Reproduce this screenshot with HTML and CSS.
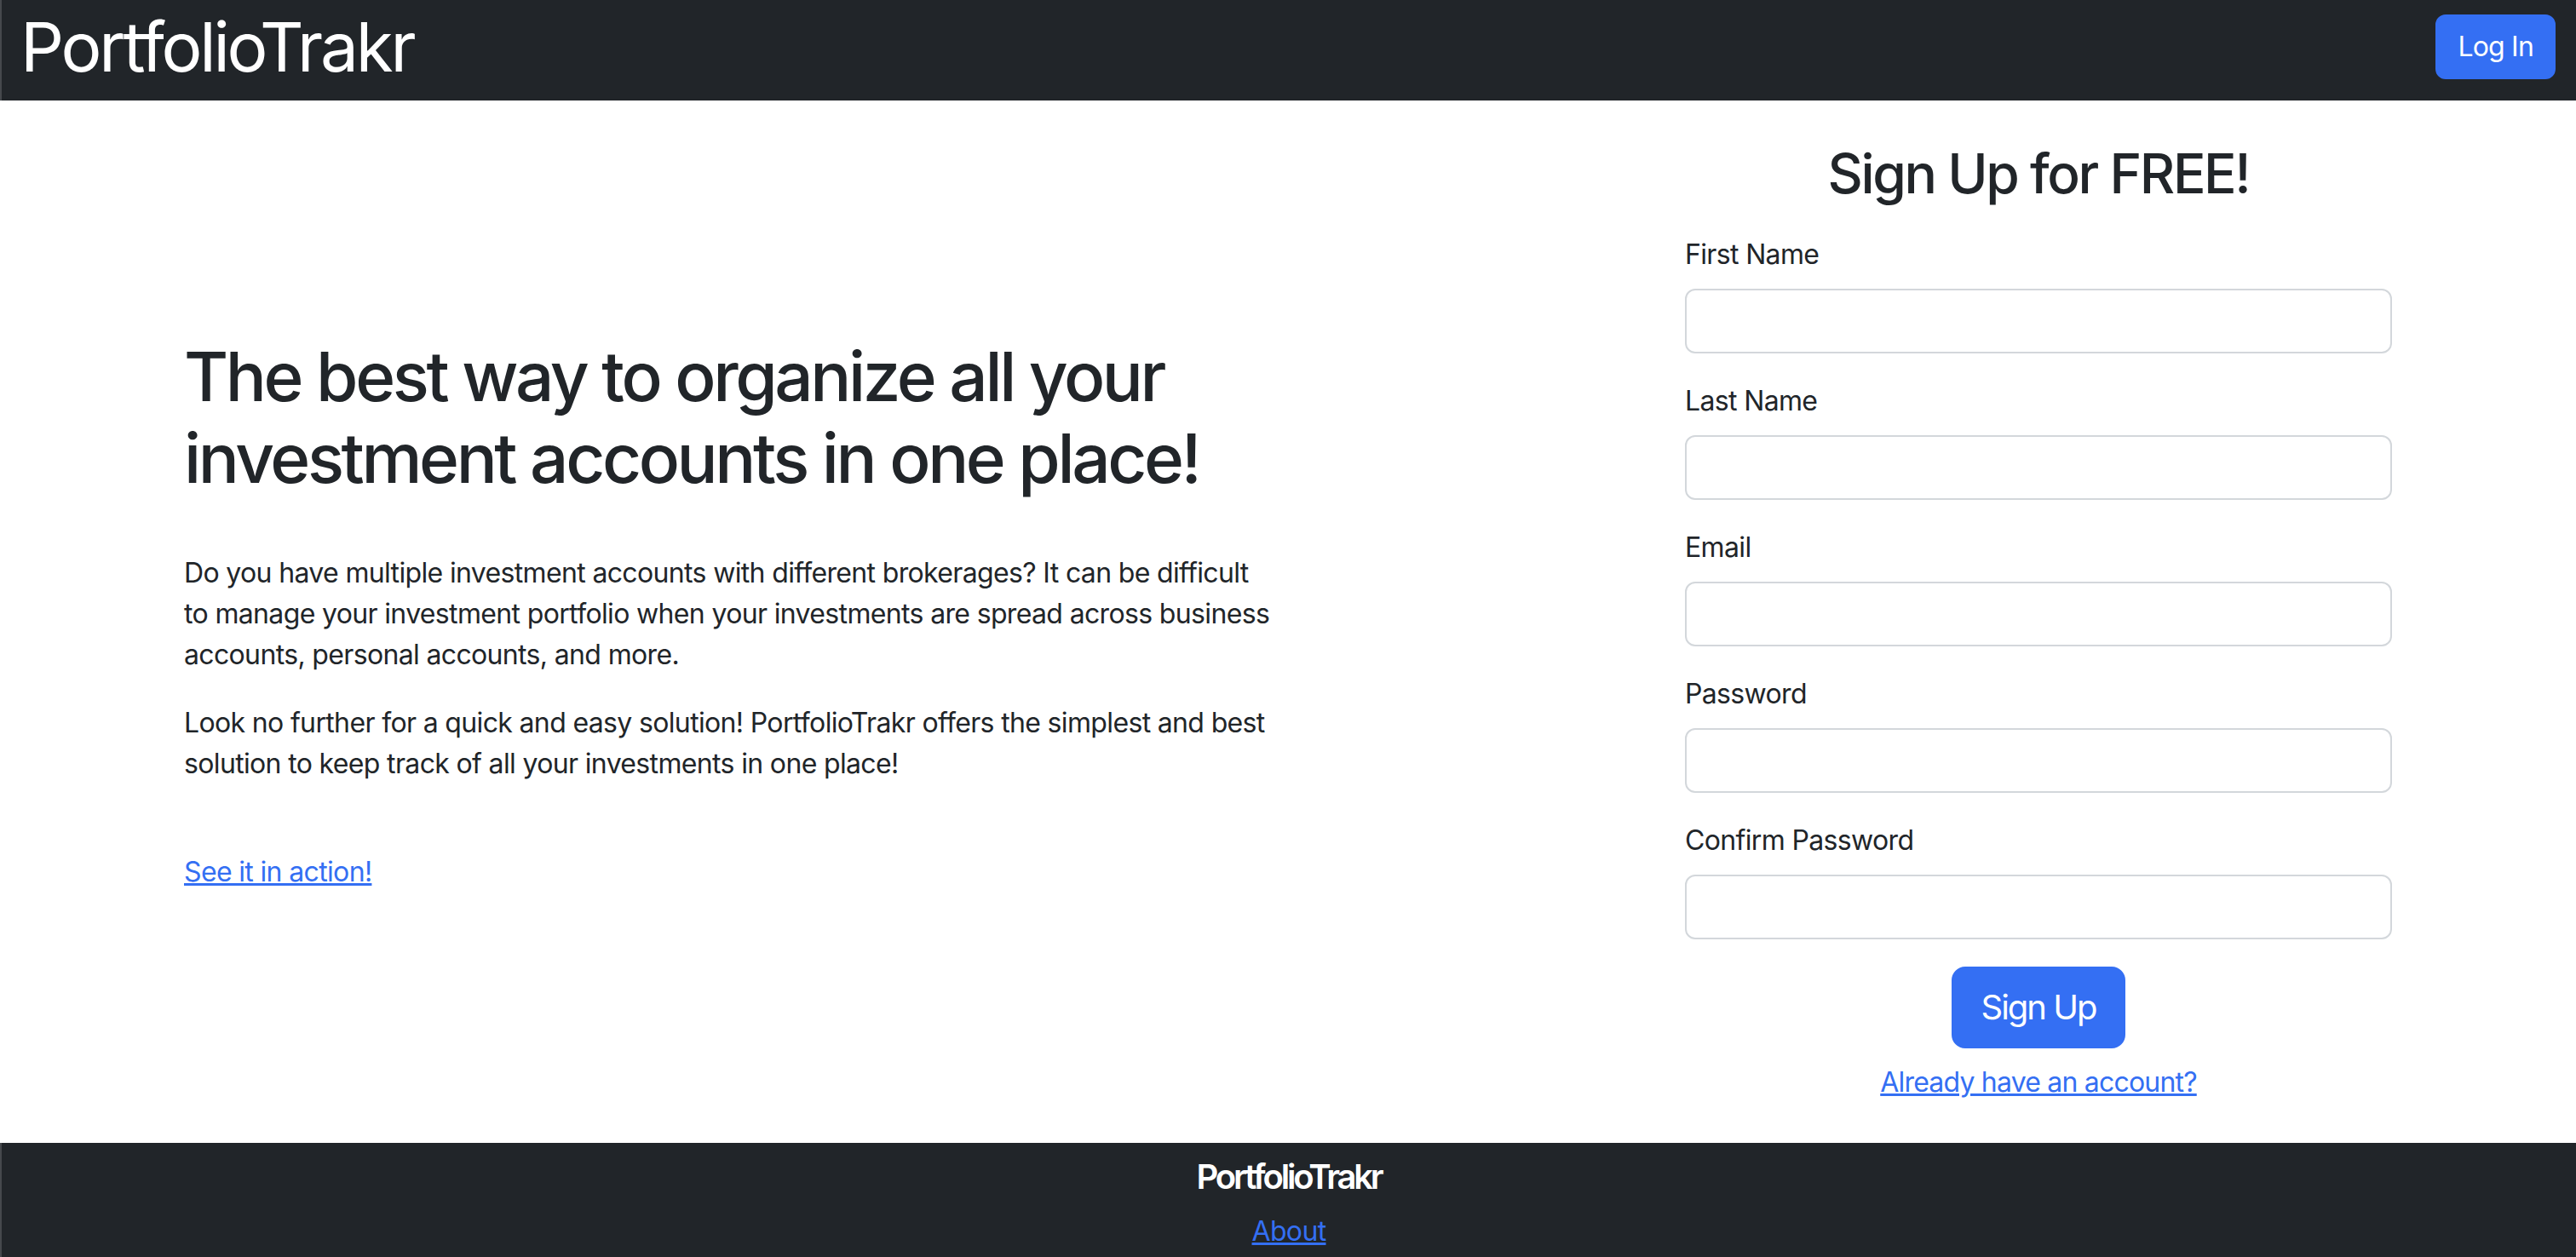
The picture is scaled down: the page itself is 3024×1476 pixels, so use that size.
FILE: index.html
```html
<!DOCTYPE html>
<html lang="en">
<head>
<meta charset="utf-8">
<title>PortfolioTrakr</title>
<link rel="stylesheet" href="styles.css">
</head>
<body>
<nav class="navbar">
  <a class="brand" href="#">PortfolioTrakr</a>
  <button class="btn btn-login" type="button">Log In</button>
</nav>
<main class="hero">
  <section class="intro">
    <h1 class="intro-title">The best way to organize all your investment accounts in one place!</h1>
    <p class="intro-text">Do you have multiple investment accounts with different brokerages? It can be difficult to manage your investment portfolio when your investments are spread across business accounts, personal accounts, and more.</p>
    <p class="intro-text">Look no further for a quick and easy solution! PortfolioTrakr offers the simplest and best solution to keep track of all your investments in one place!</p>
    <p class="demo"><a class="link" href="#">See it in action!</a></p>
  </section>
  <section class="signup">
    <h2 class="signup-title">Sign Up for FREE!</h2>
    <form class="signup-form">
      <label class="field-label" for="first">First Name</label>
      <input class="field-input" id="first" type="text">
      <label class="field-label" for="last">Last Name</label>
      <input class="field-input" id="last" type="text">
      <label class="field-label" for="email">Email</label>
      <input class="field-input" id="email" type="email">
      <label class="field-label" for="pw">Password</label>
      <input class="field-input" id="pw" type="password">
      <label class="field-label" for="pw2">Confirm Password</label>
      <input class="field-input" id="pw2" type="password">
      <div class="actions">
        <button class="btn btn-signup" type="submit">Sign Up</button>
      </div>
      <a class="link login-link" href="#">Already have an account?</a>
    </form>
  </section>
</main>
<footer class="footer">
  <h5 class="footer-brand">PortfolioTrakr</h5>
  <a class="link" href="#">About</a>
</footer>
</body>
</html>
```

FILE: styles.css
```css
* { box-sizing: border-box; }

body {
  margin: 0;
  font-family: Inter, "Noto Sans", sans-serif;
  font-size: 32px;
  line-height: 1.5;
  letter-spacing: -0.65px;
  color: #212529;
  background: #fff;
}

.navbar {
  display: flex;
  justify-content: space-between;
  align-items: center;
  height: 118px;
  padding: 0 24px 8px 22px;
  background: #212529;
  border-left: 2px solid #46494d;
}

.brand {
  color: #fff;
  font-size: 80px;
  line-height: 1;
  text-decoration: none;
  letter-spacing: -3.2px;
}

.btn {
  font-family: inherit;
  color: #fff;
  background: #346ff3;
  border: 2px solid #346ff3;
  cursor: pointer;
}

.btn-login {
  font-size: 32px;
  line-height: 48px;
  padding: 12px 24px;
  border-radius: 12px;
  letter-spacing: -0.8px;
}

.hero {
  display: flex;
  justify-content: space-between;
  align-items: center;
  padding: 48px 216px 47px 216px;
}

.intro {
  flex: 0 0 1280px;
  margin-bottom: 18px;
}

.intro-title {
  font-size: 80px;
  line-height: 1.2;
  font-weight: 500;
  margin: 0 0 63px;
  letter-spacing: -3.4px;
}

.intro-text {
  margin: 0 0 32px;
}

.demo {
  margin: 79px 0 0;
}

.link {
  color: #346ff3;
  text-decoration: underline;
}

.signup {
  flex: 0 0 830px;
}

.signup-title {
  font-size: 64px;
  line-height: 1.2;
  font-weight: 500;
  text-align: center;
  letter-spacing: -2.4px;
  margin: 0 0 32px;
}

.field-label {
  display: block;
  margin-bottom: 16px;
}

.field-input {
  display: block;
  width: 100%;
  height: 76px;
  border: 2px solid #d3d7db;
  border-radius: 12px;
  margin: 0 0 32px;
  font-size: 32px;
  background: #fff;
}

.actions {
  display: flex;
  justify-content: center;
}

.btn-signup {
  font-size: 40px;
  line-height: 60px;
  padding: 16px 32px;
  border-radius: 16px;
  letter-spacing: -2px;
}

.login-link {
  display: block;
  width: max-content;
  margin: 16px auto 0;
  letter-spacing: -0.8px;
}

.footer {
  background: #212529;
  text-align: center;
  padding: 16px 0 40px;
  border-left: 2px solid #46494d;
}

.footer-brand {
  color: #fff;
  font-size: 40px;
  line-height: 1.2;
  font-weight: 600;
  letter-spacing: -3.2px;
  margin: 0 0 16px;
}
```
